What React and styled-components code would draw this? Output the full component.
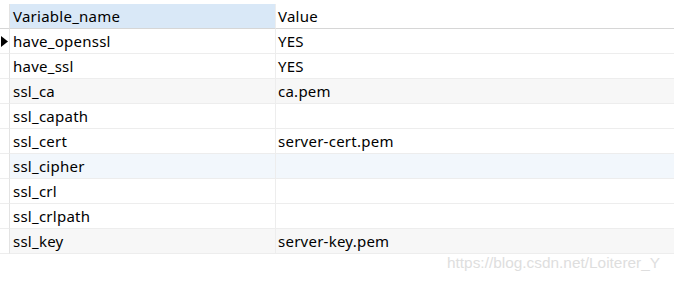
import React from "react";
import styled, { createGlobalStyle } from "styled-components";

const Global = createGlobalStyle`
  html, body { margin: 0; padding: 0; background: #fff; }
  body { font-family: "Noto Sans", "Open Sans", sans-serif; color: #000; }
`;

const Page = styled.div`
  width: 674px;
  height: 284px;
  padding-top: 4px;
  box-sizing: border-box;
  position: relative;
  overflow: hidden;
`;

const Grid = styled.div`
  display: grid;
  grid-template-columns: 10px 266px 1fr;
`;

const Cell = styled.div`
  height: 24px;
  line-height: 24px;
  font-size: 15px;
  letter-spacing: 0.25px;
  padding-left: ${(p) => (p.$first ? 3 : 2)}px;
  border-bottom: 1px solid ${(p) => (p.$head ? "#d6d6d6" : "#ededed")};
  border-right: ${(p) => (p.$last ? "none" : "1px solid #ededed")};
  background: ${(p) => p.$bg};
  white-space: nowrap;
  overflow: hidden;
`;

const Gutter = styled.div`
  height: 24px;
  border-bottom: 1px solid ${(p) => (p.$head ? "#d6d6d6" : "#ededed")};
  border-right: 1px solid #e3e3e3;
  display: flex;
  align-items: center;
  background: #fff;
`;

const Arrow = styled.svg`
  display: block;
  margin-left: 1px;
`;

const Watermark = styled.div`
  position: absolute;
  left: 447px;
  top: 254px;
  font-family: "Liberation Sans", Arial, sans-serif;
  font-size: 15.4px;
  color: #dedede;
`;

const rows = [
  ["have_openssl", "YES"],
  ["have_ssl", "YES"],
  ["ssl_ca", "ca.pem"],
  ["ssl_capath", ""],
  ["ssl_cert", "server-cert.pem"],
  ["ssl_cipher", ""],
  ["ssl_crl", ""],
  ["ssl_crlpath", ""],
  ["ssl_key", "server-key.pem"],
];

const rowBg = (i) => {
  if (i === 5) return "#f2f7fc";
  if (i === 2 || i === 8) return "#f7f7f7";
  return "#fff";
};

export default function App() {
  return (
    <Page>
      <Global />
      <Grid>
        <Gutter $head />
        <Cell $head $first $bg="#d9e8f7">Variable_name</Cell>
        <Cell $head $last $bg="#fff">Value</Cell>
        {rows.map(([name, value], i) => (
          <React.Fragment key={name}>
            <Gutter>
              {i === 0 && (
                <Arrow width="7" height="11" viewBox="0 0 7 11">
                  <polygon points="0,0 7,5.5 0,11" fill="#000" />
                </Arrow>
              )}
            </Gutter>
            <Cell $first $bg={rowBg(i)}>{name}</Cell>
            <Cell $last $bg={rowBg(i)}>{value}</Cell>
          </React.Fragment>
        ))}
      </Grid>
      <Watermark>https://blog.csdn.net/Loiterer_Y</Watermark>
    </Page>
  );
}
